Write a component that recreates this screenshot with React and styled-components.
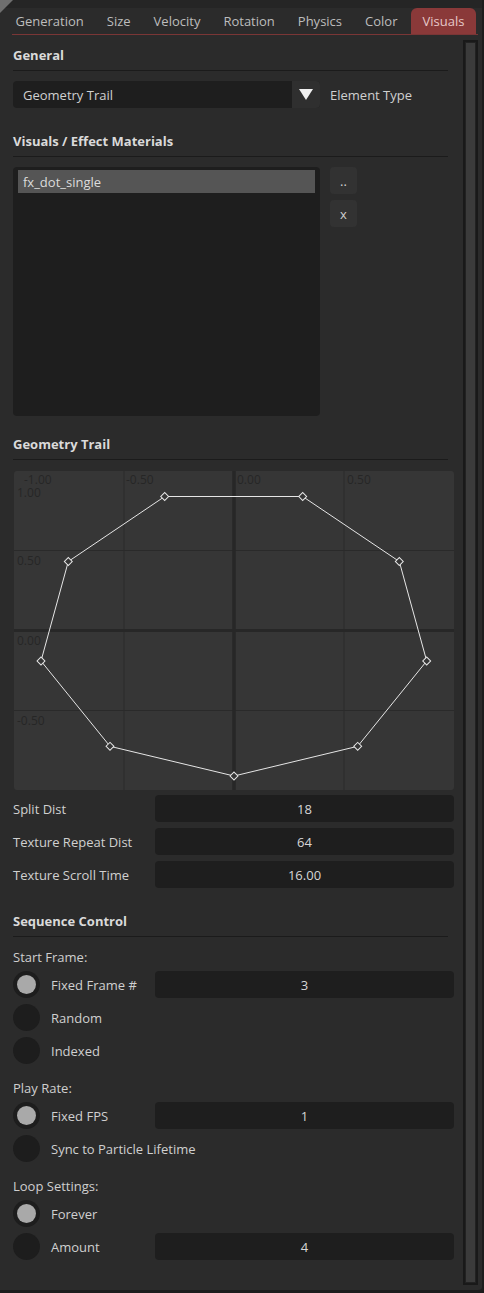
import React from "react";
import styled, { createGlobalStyle } from "styled-components";

const Global = createGlobalStyle`
  html, body { margin: 0; padding: 0; background: #1c1c1c; }
  body { font-family: "Open Sans", "Noto Sans", "DejaVu Sans", sans-serif; }
  * { box-sizing: border-box; }
`;

const Window = styled.div`
  width: 484px;
  height: 1293px;
  background: #2b2b2b;
  color: #d0d0d0;
  font-size: 13px;
  line-height: 18px;
  display: flex;
  flex-direction: column;
  position: relative;
  overflow: hidden;
  border-right: 2px solid #1d1d1d;
  border-bottom: 3px solid #1d1d1d;
  border-bottom-right-radius: 6px;
`;

const TopStrip = styled.div`
  height: 8px;
  background: #252525;
  position: relative;
  &::before {
    content: "";
    position: absolute;
    left: 0;
    top: 0;
    border-top: 13px solid #6f6f6f;
    border-right: 13px solid transparent;
  }
`;

const TabBar = styled.div`
  display: flex;
  align-items: stretch;
  height: 26px;
  padding-left: 4px;
`;

const Tab = styled.div`
  padding: 0 ${(p) => (p.$active ? "11.5px" : "11.5px")};
  margin-left: ${(p) => (p.$active ? "2px" : "0")};
  display: flex;
  align-items: center;
  color: ${(p) => (p.$active ? "#e6c8c8" : "#bdbdbd")};
  background: ${(p) => (p.$active ? "#8a3939" : "transparent")};
  border-radius: 6px 6px 0 0;
  font-size: 13px;
`;

const RedLine = styled.div`
  height: 1px;
  background: #7a3636;
  margin: 0 4px 0 12px;
`;

const Body = styled.div`
  flex: 1;
  display: flex;
  padding-left: 13px;
  min-height: 0;
`;

const Content = styled.div`
  width: 441px;
  display: flex;
  flex-direction: column;
`;

const Scrollbar = styled.div`
  width: 15px;
  margin: 5px 0 5px 9px;
  border: 2px solid #191919;
  background: #222;
  padding: 1px;
  display: flex;
`;

const Thumb = styled.div`
  flex: 1;
  background: #3b3b3b;
`;

const Heading = styled.div`
  margin-top: ${(p) => p.$mt}px;
  margin-right: 6px;
  font-weight: 700;
  color: #dadada;
  line-height: 18px;
  padding-bottom: 6px;
  border-bottom: 1px solid #1b1b1b;
`;

const DropRow = styled.div`
  margin-top: 10px;
  display: flex;
  align-items: center;
  gap: 10px;
`;

const Dropdown = styled.div`
  width: 307px;
  height: 27px;
  background: #1e1e1e;
  border-radius: 4px;
  display: flex;
  align-items: center;
  overflow: hidden;
`;

const DropText = styled.div`
  flex: 1;
  padding-left: 10px;
  color: #d0d0d0;
`;

const DropArrow = styled.div`
  width: 28px;
  height: 100%;
  background: #2f2f2f;
  display: flex;
  align-items: center;
  justify-content: center;
  &::after {
    content: "";
    border-top: 11px solid #f0f0f0;
    border-left: 7px solid transparent;
    border-right: 7px solid transparent;
  }
`;

const MatRow = styled.div`
  margin-top: 10px;
  display: flex;
  gap: 10px;
  align-items: flex-start;
`;

const ListBox = styled.div`
  width: 307px;
  height: 249px;
  background: #1e1e1e;
  border-radius: 4px;
  padding: 3px 5px;
`;

const ListItem = styled.div`
  height: 23px;
  background: #555;
  padding-left: 5px;
  display: flex;
  align-items: center;
  color: #dcdcdc;
`;

const ButtonCol = styled.div`
  display: flex;
  flex-direction: column;
  gap: 6px;
`;

const SmallButton = styled.div`
  width: 27px;
  height: 27px;
  background: #323232;
  border-radius: 4px;
  display: flex;
  align-items: center;
  justify-content: center;
  color: #cfcfcf;
  font-size: 13px;
`;

const Chart = styled.div`
  margin-top: 11px;
  margin-left: 1px;
  width: 440px;
  height: 319px;
  background: #363636;
  border-radius: 3px;
  overflow: hidden;
  svg { display: block; }
`;

const FieldList = styled.div`
  margin-top: ${(p) => p.$mt}px;
  display: flex;
  flex-direction: column;
  gap: 6px;
`;

const FieldRow = styled.div`
  display: grid;
  grid-template-columns: 142px 1fr;
  height: 27px;
  align-items: center;
  white-space: nowrap;
`;

const ValueBox = styled.div`
  height: 27px;
  background: #1e1e1e;
  border-radius: 4px;
  display: flex;
  align-items: center;
  justify-content: center;
  color: #d6d6d6;
`;

const SubLabel = styled.div`
  margin-top: ${(p) => p.$mt}px;
  color: #cfcfcf;
`;

const RadioLabel = styled.div`
  display: flex;
  align-items: center;
  gap: 11px;
  grid-column: ${(p) => (p.$wide ? "1 / span 2" : "auto")};
`;

const Radio = styled.div`
  flex: none;
  width: 27px;
  height: 27px;
  border-radius: 50%;
  background: #1d1d1d;
  display: flex;
  align-items: center;
  justify-content: center;
  &::after {
    content: "";
    width: 19px;
    height: 19px;
    border-radius: 50%;
    background: ${(p) => (p.$on ? "#a9a9a9" : "transparent")};
  }
`;

const TABS = ["Generation", "Size", "Velocity", "Rotation", "Physics", "Color", "Visuals"];

const pts = [
  [150.7, 25.5],
  [288.7, 25.5],
  [385.3, 90.5],
  [412.7, 190],
  [343.7, 275.3],
  [220, 305],
  [96, 275.3],
  [27, 190],
  [54.3, 90.5],
];

function TrailChart() {
  const lbl = { fill: "#262626", fontSize: 12, fontFamily: "Open Sans, sans-serif" };
  return (
    <Chart>
      <svg width="440" height="319" viewBox="0 0 440 319">
        <line x1="110" y1="0" x2="110" y2="319" stroke="#2a2a2a" strokeWidth="1" />
        <line x1="330" y1="0" x2="330" y2="319" stroke="#2a2a2a" strokeWidth="1" />
        <line x1="0" y1="79.5" x2="440" y2="79.5" stroke="#2a2a2a" strokeWidth="1" />
        <line x1="0" y1="239.5" x2="440" y2="239.5" stroke="#2a2a2a" strokeWidth="1" />
        <line x1="220" y1="0" x2="220" y2="319" stroke="#272727" strokeWidth="3.5" />
        <line x1="0" y1="159.5" x2="440" y2="159.5" stroke="#272727" strokeWidth="3" />
        <text x="10" y="13" style={lbl}>-1.00</text>
        <text x="3" y="26" style={lbl}>1.00</text>
        <text x="112" y="13" style={lbl}>-0.50</text>
        <text x="223" y="13" style={lbl}>0.00</text>
        <text x="333" y="13" style={lbl}>0.50</text>
        <text x="3" y="94" style={lbl}>0.50</text>
        <text x="3" y="174" style={lbl}>0.00</text>
        <text x="3" y="254" style={lbl}>-0.50</text>
        <polygon
          points={pts.map((p) => p.join(",")).join(" ")}
          fill="none"
          stroke="#e6e6e6"
          strokeWidth="1"
        />
        {pts.map(([x, y], i) => (
          <rect
            key={i}
            x={x - 2.8}
            y={y - 2.8}
            width="5.6"
            height="5.6"
            fill="#363636"
            stroke="#e6e6e6"
            strokeWidth="1"
            transform={`rotate(45 ${x} ${y})`}
          />
        ))}
      </svg>
    </Chart>
  );
}

function RadioRow({ on, label, value }) {
  const hasValue = value !== undefined;
  return (
    <FieldRow>
      <RadioLabel $wide={!hasValue}>
        <Radio $on={on} />
        <span>{label}</span>
      </RadioLabel>
      {hasValue && <ValueBox>{value}</ValueBox>}
    </FieldRow>
  );
}

export default function App() {
  return (
    <>
      <Global />
      <Window>
        <TopStrip />
        <TabBar>
          {TABS.map((t) => (
            <Tab key={t} $active={t === "Visuals"}>
              {t}
            </Tab>
          ))}
        </TabBar>
        <RedLine />
        <Body>
          <Content>
            <Heading $mt={11}>General</Heading>
            <DropRow>
              <Dropdown>
                <DropText>Geometry Trail</DropText>
                <DropArrow />
              </Dropdown>
              <span>Element Type</span>
            </DropRow>

            <Heading $mt={24}>Visuals / Effect Materials</Heading>
            <MatRow>
              <ListBox>
                <ListItem>fx_dot_single</ListItem>
              </ListBox>
              <ButtonCol>
                <SmallButton>..</SmallButton>
                <SmallButton>x</SmallButton>
              </ButtonCol>
            </MatRow>

            <Heading $mt={19}>Geometry Trail</Heading>
            <TrailChart />
            <FieldList $mt={5}>
              <FieldRow>
                <span>Split Dist</span>
                <ValueBox>18</ValueBox>
              </FieldRow>
              <FieldRow>
                <span>Texture Repeat Dist</span>
                <ValueBox>64</ValueBox>
              </FieldRow>
              <FieldRow>
                <span>Texture Scroll Time</span>
                <ValueBox>16.00</ValueBox>
              </FieldRow>
            </FieldList>

            <Heading $mt={24}>Sequence Control</Heading>
            <SubLabel $mt={11}>Start Frame:</SubLabel>
            <FieldList $mt={5}>
              <RadioRow on label="Fixed Frame #" value="3" />
              <RadioRow label="Random" />
              <RadioRow label="Indexed" />
            </FieldList>

            <SubLabel $mt={15}>Play Rate:</SubLabel>
            <FieldList $mt={5}>
              <RadioRow on label="Fixed FPS" value="1" />
              <RadioRow label="Sync to Particle Lifetime" />
            </FieldList>

            <SubLabel $mt={15}>Loop Settings:</SubLabel>
            <FieldList $mt={5}>
              <RadioRow on label="Forever" />
              <RadioRow label="Amount" value="4" />
            </FieldList>
          </Content>
          <Scrollbar>
            <Thumb />
          </Scrollbar>
        </Body>
      </Window>
    </>
  );
}
